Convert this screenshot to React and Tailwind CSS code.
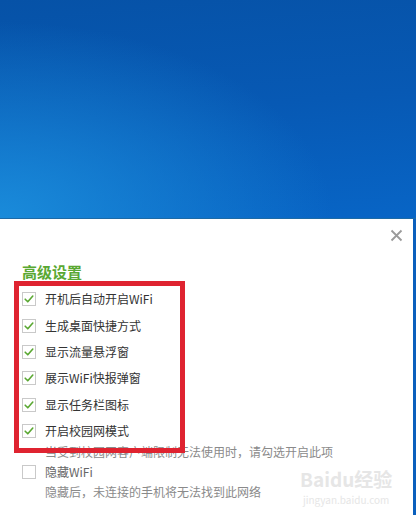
import React from 'react'

const items = [
  '开机后自动开启WiFi',
  '生成桌面快捷方式',
  '显示流量悬浮窗',
  '展示WiFi快报弹窗',
  '显示任务栏图标',
  '开启校园网模式',
]

const Box = ({ checked }) => (
  <span className="w-[14px] h-[14px] border border-[#c9c9c9] bg-white flex items-center justify-center shrink-0">
    {checked && (
      <svg width="12" height="12" viewBox="0 0 12 12" fill="none">
        <path d="M2.2 6.2 L4.8 8.8 L9.8 3" stroke="#5aa832" strokeWidth="1.6" strokeLinecap="round" strokeLinejoin="round" />
      </svg>
    )}
  </span>
)

const App = () => {
  return (
    <div className="w-[416px] h-[515px] overflow-hidden flex flex-col bg-[#0a5fbd] font-['Noto_Sans_CJK_SC','Liberation_Sans',sans-serif]">
      <div className="h-[219px] shrink-0 border-b border-[#1d6aa6] bg-[radial-gradient(ellipse_80%_90%_at_0%_100%,#1a8bda_0%,rgba(26,139,218,0)_100%),linear-gradient(175deg,#0652a7_0%,#0759b4_50%,#0865c6_100%)]" />

      <div className="relative flex-1 bg-white mr-[3px] pl-[22px]">
        <div className="h-[32px] flex items-center justify-end pr-[10px]">
          <svg width="13" height="13" viewBox="0 0 13 13">
            <path d="M1.5 1.5 L11.5 11.5 M11.5 1.5 L1.5 11.5" stroke="#9a9a9a" strokeWidth="1.8" />
          </svg>
        </div>

        <h2 className="mt-[11px] text-[15px] leading-[20px] text-[#5aa832] font-semibold">高级设置</h2>

        <div className="mt-[4px]">
          {items.map(item => (
            <div key={item} className="h-[26.4px] flex items-center gap-[9px]">
              <Box checked />
              <span className="text-[12px] leading-[16px] text-[#333]">{item}</span>
            </div>
          ))}
        </div>

        <p className="pl-[23px] text-[12px] leading-[16px] text-[#8a8a8a]">当受到校园网客户端限制无法使用时，请勾选开启此项</p>

        <div className="h-[24px] flex items-center gap-[9px]">
          <Box />
          <span className="text-[12px] leading-[16px] text-[#666]">隐藏WiFi</span>
        </div>

        <p className="pl-[23px] text-[12px] leading-[16px] text-[#8a8a8a]">隐藏后，未连接的手机将无法找到此网络</p>

        {/* annotation */}
        <div className="absolute left-[14px] top-[62px] w-[171px] h-[172px] border-[5px] border-[#df2330]" />

        {/* watermark */}
        <div className="absolute left-[300px] top-[250px] flex flex-col items-center gap-[5px] text-[#e6e6e6]">
          <span className="text-[19px] leading-[20px] font-bold">Baidu经验</span>
          <span className="text-[10px] leading-[11px]">jingyan.baidu.com</span>
        </div>
      </div>
    </div>
  )
}

export default App
